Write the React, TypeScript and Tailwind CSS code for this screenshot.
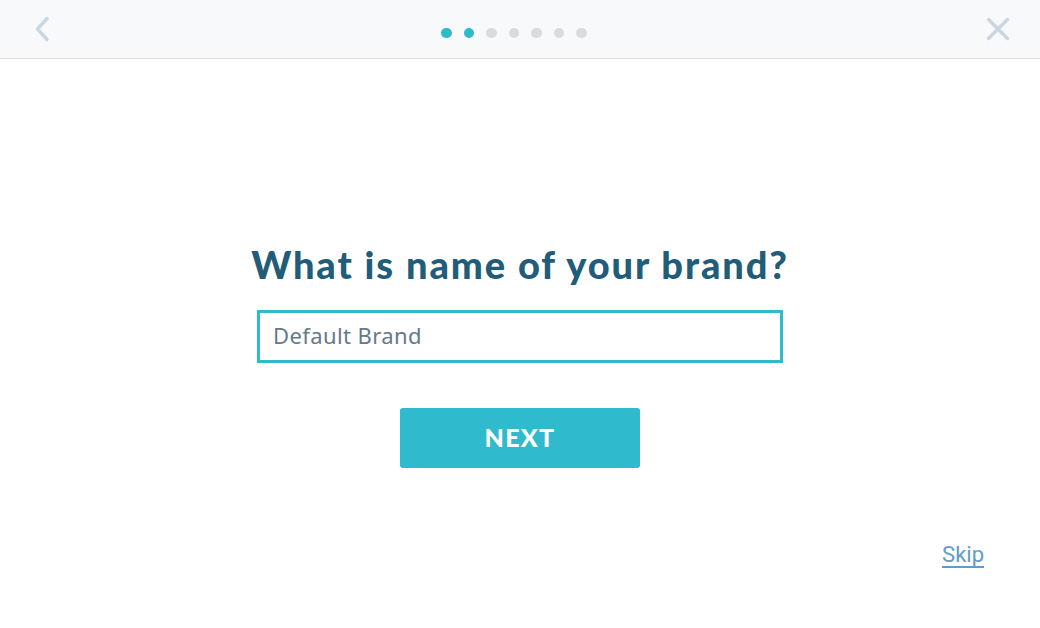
import React from 'react';

const steps = [true, true, false, false, false, false, false];

const App: React.FC = () => {
  return (
    <div className="flex h-[628px] w-[1040px] flex-col bg-white" style={{ fontFamily: '"Open Sans", sans-serif' }}>
      <header className="flex h-[59px] shrink-0 items-center justify-between border-b border-[#e3e3e3] bg-[#f8f9fa] pl-[34px] pr-[30px]">
        <button className="flex h-[26px] w-[16px] items-center justify-center">
          <svg width="16" height="26" viewBox="0 0 16 26" fill="none">
            <path d="M13 2.5 L3.5 13 L13 23.5" stroke="#c9d7e3" strokeWidth="3.4" strokeLinecap="round" strokeLinejoin="round" />
          </svg>
        </button>
        <div className="mt-[8px] flex items-center gap-[12px] pr-[8px]">
          {steps.map((on, i) => (
            <span key={i} className={on ? 'h-[10.5px] w-[10.5px] rounded-full bg-[#2eb9cd]' : 'h-[10.5px] w-[10.5px] rounded-full bg-[#dadbdc]'} />
          ))}
        </div>
        <button className="flex h-[24px] w-[24px] items-center justify-center">
          <svg width="24" height="24" viewBox="0 0 24 24" fill="none">
            <path d="M2.5 2.5 L21.5 21.5 M21.5 2.5 L2.5 21.5" stroke="#c9d7e3" strokeWidth="3.4" strokeLinecap="round" />
          </svg>
        </button>
      </header>

      <main className="relative flex flex-1 flex-col items-center pt-[183px]">
        <h1
          className="text-[38px] font-black leading-[44px] tracking-[1.9px] text-[#215c79]"
          style={{ fontFamily: 'Lato, sans-serif' }}
        >
          What is name of your brand?
        </h1>
        <input
          defaultValue="Default Brand"
          className="mt-[24px] h-[53px] w-[526px] border-[3px] border-[#2fbacd] px-[13px] pb-[3px] text-[22px] tracking-[0.4px] text-[#66788a] outline-none"
          style={{ fontFamily: '"Noto Sans", sans-serif' }}
        />
        <button
          className="mt-[45px] h-[60px] w-[240px] rounded-[3px] bg-[#2fbacd] text-[25px] font-black tracking-[1.3px] text-white"
          style={{ fontFamily: 'Lato, sans-serif' }}
        >
          NEXT
        </button>
        <div className="mt-auto flex w-full justify-end pb-[60px] pr-[56px]">
          <a
            href="#"
            className="text-[22px] leading-[26px] text-[#5d9ccb] underline decoration-[2px] underline-offset-[4px]"
            style={{ fontFamily: 'Roboto, sans-serif' }}
          >
            Skip
          </a>
        </div>
      </main>
    </div>
  );
};

export default App;
